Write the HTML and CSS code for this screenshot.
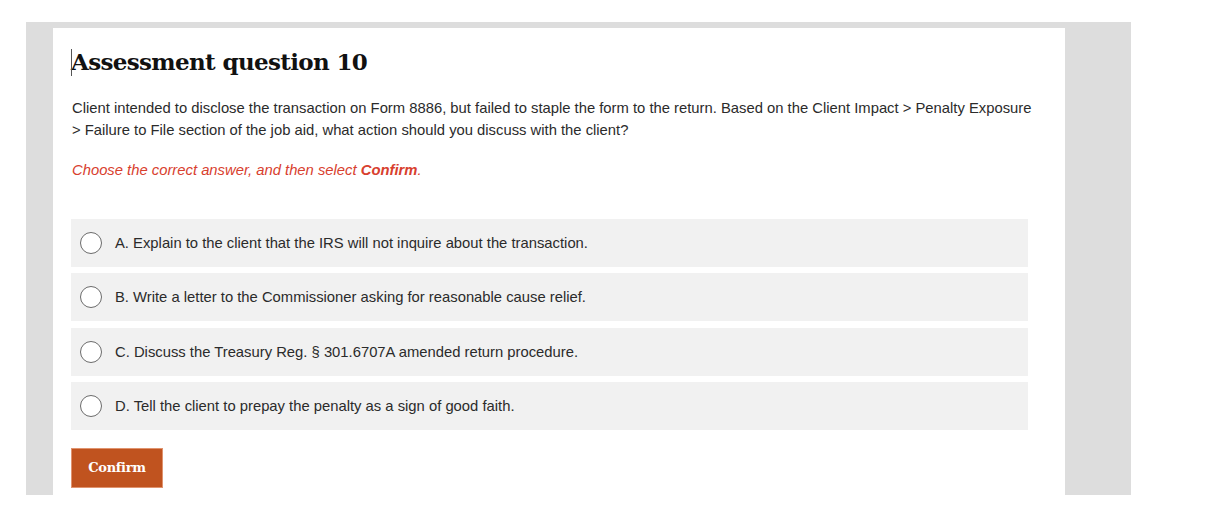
FILE: index.html
```html
<!DOCTYPE html>
<html lang="en">
<head>
<meta charset="utf-8">
<title>Assessment question 10</title>
<link rel="stylesheet" href="styles.css">
</head>
<body>
<div class="frame">
  <div class="card">
    <h1 class="title"><span class="caret"></span>Assessment question 10</h1>
    <p class="question">Client intended to disclose the transaction on Form 8886, but failed to staple the form to the return. Based on the Client Impact &gt; Penalty Exposure &gt; Failure to File section of the job aid, what action should you discuss with the client?</p>
    <p class="instruction">Choose the correct answer, and then select <strong>Confirm</strong>.</p>
    <div class="options">
      <label class="option"><span class="radio"></span><span class="option-text">A. Explain to the client that the IRS will not inquire about the transaction.</span></label>
      <label class="option"><span class="radio"></span><span class="option-text">B. Write a letter to the Commissioner asking for reasonable cause relief.</span></label>
      <label class="option"><span class="radio"></span><span class="option-text">C. Discuss the Treasury Reg. § 301.6707A amended return procedure.</span></label>
      <label class="option"><span class="radio"></span><span class="option-text">D. Tell the client to prepay the penalty as a sign of good faith.</span></label>
    </div>
    <button class="confirm" type="button">Confirm</button>
  </div>
</div>
</body>
</html>
```

FILE: styles.css
```css
html, body {
  margin: 0;
  padding: 0;
  background: #ffffff;
}

body {
  font-family: "Liberation Sans", Arial, sans-serif;
  color: #333333;
}

.frame {
  margin: 22px 0 0 26px;
  width: 1105px;
  height: 473px;
  background: #dddddd;
  padding-top: 6px;
  box-sizing: border-box;
}

.card {
  margin-left: 27px;
  width: 1012px;
  height: 467px;
  background: #ffffff;
  padding: 0 18px 0 18px;
  box-sizing: border-box;
  overflow: hidden;
}

.title {
  position: relative;
  margin: 0;
  padding-top: 19px;
  font-family: "DejaVu Serif", "Liberation Serif", serif;
  font-weight: bold;
  font-size: 23px;
  line-height: 30px;
  color: #111111;
  letter-spacing: -0.65px;
}

.caret {
  position: absolute;
  left: 0;
  top: 21px;
  width: 1px;
  height: 27px;
  background: #555555;
}

.question {
  margin: 20px 0 0 1px;
  width: 970px;
  font-size: 14.8px;
  line-height: 22px;
  color: #2b2b2b;
}

.instruction {
  margin: 18px 0 0 1px;
  font-size: 14.8px;
  line-height: 22px;
  font-style: italic;
  color: #d8402e;
}

.instruction strong {
  font-weight: bold;
}

.options {
  margin-top: 38px;
  width: 957px;
  display: flex;
  flex-direction: column;
  gap: 6.3px;
}

.option {
  display: flex;
  align-items: center;
  height: 48px;
  background: #f1f1f1;
  padding-left: 9px;
  box-sizing: border-box;
}

.radio {
  width: 22px;
  height: 22px;
  border: 1.5px solid #6b6b6b;
  border-radius: 50%;
  background: #ffffff;
  box-sizing: border-box;
  flex: none;
}

.option-text {
  margin-left: 13px;
  font-size: 14.8px;
  color: #2b2b2b;
}

.confirm {
  display: block;
  margin-top: 18px;
  width: 92px;
  height: 40px;
  border: 1px solid #e0936e;
  background: #c0531f;
  color: #ffffff;
  font-family: "DejaVu Serif", "Liberation Serif", serif;
  font-weight: bold;
  font-size: 13px;
  letter-spacing: -0.3px;
  padding: 0;
  cursor: pointer;
}
```
